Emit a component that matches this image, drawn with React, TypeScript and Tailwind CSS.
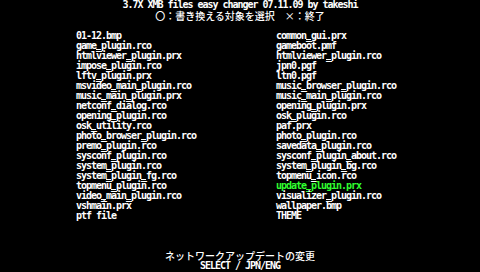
import React from 'react'

const leftFiles = [
  '01-12.bmp',
  'game_plugin.rco',
  'htmlviewer_plugin.prx',
  'impose_plugin.rco',
  'lftv_plugin.prx',
  'msvideo_main_plugin.rco',
  'music_main_plugin.prx',
  'netconf_dialog.rco',
  'opening_plugin.rco',
  'osk_utility.rco',
  'photo_browser_plugin.rco',
  'premo_plugin.rco',
  'sysconf_plugin.rco',
  'system_plugin.rco',
  'system_plugin_fg.rco',
  'topmenu_plugin.rco',
  'video_main_plugin.rco',
  'vshmain.prx',
  'ptf file',
]

const rightFiles = [
  'common_gui.prx',
  'gameboot.pmf',
  'htmlviewer_plugin.rco',
  'jpn0.pgf',
  'ltn0.pgf',
  'music_browser_plugin.rco',
  'music_main_plugin.rco',
  'opening_plugin.prx',
  'osk_plugin.rco',
  'paf.prx',
  'photo_plugin.rco',
  'savedata_plugin.rco',
  'sysconf_plugin_about.rco',
  'system_plugin_bg.rco',
  'topmenu_icon.rco',
  'update_plugin.prx',
  'visualizer_plugin.rco',
  'wallpaper.bmp',
  'THEME',
]

const selected = 'update_plugin.prx'

const mono = "font-['DejaVu_Sans_Mono',monospace] font-bold text-[10px] leading-[10px] tracking-[-1.02px] whitespace-pre"
const jp = "font-['Noto_Sans_CJK_JP',sans-serif] font-medium text-[10px] leading-[10px] whitespace-pre"

// the underscore glyph is too thin at this size, so underline it to get a solid 1px bar
const FileName: React.FC<{ name: string }> = ({ name }) => {
  const parts = name.split('_')
  return (
    <>
      {parts.map((p, i) => (
        <React.Fragment key={i}>
          {i > 0 && <span className="underline decoration-1 underline-offset-[0px]">_</span>}
          {p}
        </React.Fragment>
      ))}
    </>
  )
}

const FileColumn: React.FC<{ files: string[] }> = ({ files }) => (
  <div className="flex flex-col">
    {files.map(f => (
      <div key={f} className={`${mono} ${f === selected ? 'text-[#30ff30]' : 'text-white'}`}>
        <FileName name={f} />
      </div>
    ))}
  </div>
)

const App: React.FC = () => {
  return (
    <div className="w-[480px] h-[272px] bg-black text-white flex flex-col overflow-hidden">
      <div className={`${mono} text-center`}>3.7X XMB files easy changer 07.11.09 by takeshi</div>
      <div className={`${jp} text-center mt-[1px]`}>
        〇：書き換える対象を選択　<span className="inline-block w-[10px] text-center">×</span>：終了
      </div>

      <div className="grid grid-cols-[200px_200px] pl-[76px] mt-[10px]">
        <FileColumn files={leftFiles} />
        <FileColumn files={rightFiles} />
      </div>

      <div className="mt-auto pb-[1px] flex flex-col items-center">
        <div className={jp}>ネットワークアップデートの変更</div>
        <div className={mono}>SELECT / JPN/ENG</div>
      </div>
    </div>
  )
}

export default App
